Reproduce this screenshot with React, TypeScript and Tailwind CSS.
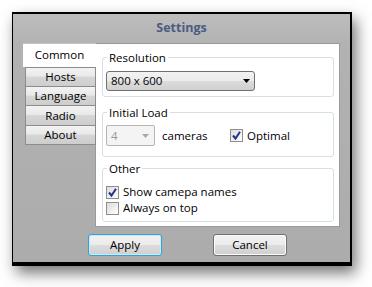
import React from "react";

const TABS = ["Hosts", "Language", "Radio", "About"];

const FONT = "font-['Open_Sans','Noto_Sans',sans-serif]";

function CheckBox({ checked }: { checked?: boolean }) {
  return (
    <span className="grid size-[13px] shrink-0 place-items-center border border-[#8e8f8f] bg-[linear-gradient(135deg,#dcdcdc,#ffffff)]">
      {checked && (
        <svg width="11" height="11" viewBox="0 0 11 11">
          <path d="M2 5.5 L4.5 8.5 L9 1.8" fill="none" stroke="#25308c" strokeWidth="2" />
        </svg>
      )}
    </span>
  );
}

function Arrow({ color }: { color: string }) {
  return (
    <svg width="7" height="4" viewBox="0 0 7 4">
      <path d="M0 0 H7 L3.5 4 Z" fill={color} />
    </svg>
  );
}

export default function App() {
  return (
    <div className={`h-[287px] w-[372px] bg-white pl-[12px] pt-[12px] ${FONT} text-[11.5px] text-black`}>
      <div className="flex h-[254px] w-[340px] flex-col border-t-2 border-r-2 border-b-4 border-l border-black bg-[linear-gradient(180deg,#bdbdbd_0px,#b2b2b2_30px,#acacac_100%)] shadow-[4px_7px_14px_rgba(0,0,0,0.55)]">
        <div className="flex h-[29px] items-center justify-center text-[12.5px] font-bold text-[#4c5b84]">
          Settings
        </div>

        <div className="flex h-[184px] px-[10px]">
          <div className="flex w-[73px] flex-col">
            <div className="flex h-[24px] items-center justify-center border-t border-[#c4c4c4] bg-white pb-[1px]">
              Common
            </div>
            <div className="flex flex-1 flex-col border-r border-[#9a9a9a] pl-[2px]">
              {TABS.map((t) => (
                <div
                  key={t}
                  className="-mr-px flex h-[19.5px] items-center justify-center border border-t-0 border-[#8c8c8c] bg-[linear-gradient(180deg,#f3f3f3_0%,#e9e9e9_45%,#d6d6d6_50%,#cdcdcd_100%)] leading-none first:border-t"
                >
                  {t}
                </div>
              ))}
            </div>
          </div>

          <div className="flex flex-1 flex-col border-t border-r border-b border-[#9a9a9a] bg-white pr-[5px] pl-[6px] pt-[6px]">
            <fieldset className="rounded-[3px] border border-[#d5dfe5] pb-[5px] pl-[3px] pt-[6px]">
              <legend className="ml-[1px] px-[2px] leading-[15px]">Resolution</legend>
              <div className="flex h-[20px] w-[149px] items-center justify-between rounded-[3px] border border-[#707070] bg-[linear-gradient(180deg,#f2f2f2_0%,#ebebeb_50%,#dddddd_50%,#cfcfcf_100%)] pr-[4px] pl-[4px]">
                <span>800 x 600</span>
                <Arrow color="#000" />
              </div>
            </fieldset>

            <fieldset className="mt-[8px] rounded-[3px] border border-[#d5dfe5] pb-[10px] pl-[3px] pt-[5px]">
              <legend className="ml-[1px] px-[2px] leading-[15px]">Initial Load</legend>
              <div className="flex items-center">
                <div className="flex h-[21px] w-[49px] items-center justify-between rounded-[2px] border border-[#b5b5b5] bg-[#f4f4f4] pr-[5px] pl-[4px] text-[#9a9a9a]">
                  <span>4</span>
                  <Arrow color="#a8a8a8" />
                </div>
                <span className="ml-[7px] w-[68px]">cameras</span>
                <CheckBox checked />
                <span className="ml-[4px]">Optimal</span>
              </div>
            </fieldset>

            <fieldset className="mt-[4px] rounded-[3px] border border-[#d5dfe5] pb-[5px] pl-[3px] pt-[8px]">
              <legend className="ml-[1px] px-[2px] leading-[15px]">Other</legend>
              <div className="flex h-[16px] items-center gap-[4px]">
                <CheckBox checked />
                <span>Show camepa names</span>
              </div>
              <div className="flex h-[16px] items-center gap-[4px]">
                <CheckBox />
                <span>Always on top</span>
              </div>
            </fieldset>
          </div>
        </div>

        <div className="mt-[7px] flex gap-[51px] pl-[75px]">
          <button className="h-[22px] w-[74px] rounded-[3px] border border-[#3c9fd4] bg-[linear-gradient(180deg,#f2f2f2_0%,#ebebeb_50%,#dddddd_50%,#cfcfcf_100%)] shadow-[inset_0_0_0_1px_#c4ecfa]">
            Apply
          </button>
          <button className="h-[22px] w-[74px] rounded-[3px] border border-[#707070] bg-[linear-gradient(180deg,#f2f2f2_0%,#ebebeb_50%,#dddddd_50%,#cfcfcf_100%)] shadow-[inset_0_0_0_1px_#fbfbfb]">
            Cancel
          </button>
        </div>
      </div>
    </div>
  );
}
